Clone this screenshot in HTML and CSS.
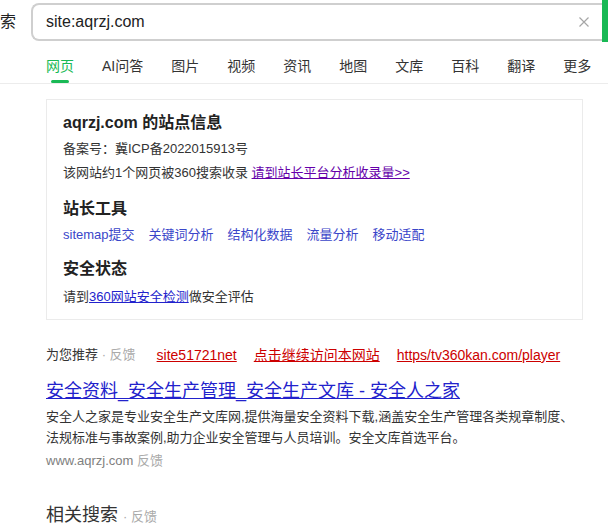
FILE: index.html
```html
<!DOCTYPE html>
<html lang="zh-CN">

<head>
    <meta charset="UTF-8">
    <meta name="viewport" content="width=device-width, initial-scale=1.0">
    <title>site:aqrzj.com - 360搜索</title>
    <link rel="stylesheet" href="styles.css">
</head>

<body>

    <!-- Header: logo + search box -->
    <div class="header">
        <div class="logo">索</div>
        <div class="search-box">
            <span class="query">site:aqrzj.com</span>
            <svg class="clear" width="10" height="10" viewBox="0 0 10 10">
                <path d="M0.5 0.5 L9.5 9.5 M9.5 0.5 L0.5 9.5" stroke="#a6a6a6" stroke-width="1.2" fill="none" />
            </svg>
        </div>
        <div class="search-btn"></div>
    </div>

    <!-- Tabs -->
    <div class="tabs">
        <a class="tab active"><span>网页</span><i class="bar"></i></a>
        <a class="tab"><span>AI问答</span></a>
        <a class="tab"><span>图片</span></a>
        <a class="tab"><span>视频</span></a>
        <a class="tab"><span>资讯</span></a>
        <a class="tab"><span>地图</span></a>
        <a class="tab"><span>文库</span></a>
        <a class="tab"><span>百科</span></a>
        <a class="tab"><span>翻译</span></a>
        <a class="tab"><span>更多</span></a>
    </div>

    <div class="main">
        <!-- Site info card -->
        <div class="site-card">
            <h3 class="card-title">aqrzj.com 的站点信息</h3>
            <p class="line first">备案号：冀ICP备2022015913号</p>
            <p class="line">该网站约1个网页被360搜索收录 <a class="visited">请到站长平台分析收录量&gt;&gt;</a></p>

            <h3 class="card-title section">站长工具</h3>
            <div class="tools">
                <a>sitemap提交</a>
                <a>关键词分析</a>
                <a>结构化数据</a>
                <a>流量分析</a>
                <a>移动适配</a>
            </div>

            <h3 class="card-title section last">安全状态</h3>
            <p class="line safe">请到<a class="blue">360网站安全检测</a>做安全评估</p>
        </div>

        <!-- Recommend row -->
        <div class="recommend">
            <span class="rec-label">为您推荐 <span class="muted">· 反馈</span></span>
            <div class="rec-links">
                <a>site51721net</a>
                <a>点击继续访问本网站</a>
                <a>https/tv360kan.com/player</a>
            </div>
        </div>

        <!-- Result -->
        <div class="result">
            <a class="res-title">安全资料_安全生产管理_安全生产文库 - 安全人之家</a>
            <p class="res-desc">安全人之家是专业安全生产文库网,提供海量安全资料下载,涵盖安全生产管理各类规章制度、法规标准与事故案例,助力企业安全管理与人员培训。安全文库首选平台。</p>
            <p class="res-url">www.aqrzj.com <span class="muted">反馈</span></p>
        </div>

        <div class="related">相关搜索 <span class="muted">· 反馈</span></div>
    </div>

</body>

</html>
```

FILE: styles.css
```css
body {
    margin: 0;
    font-family: "Liberation Sans", Arial, "Noto Sans CJK SC", sans-serif;
    color: #333;
    background: #fff;
    overflow: hidden;
}

a {
    cursor: pointer;
}

/* Header */
.header {
    display: flex;
    align-items: flex-start;
    height: 42px;
    overflow: hidden;
}

.logo {
    width: 31px;
    flex-shrink: 0;
    font-size: 16px;
    line-height: 20px;
    margin-top: 12px;
    color: #222;
}

.search-box {
    width: 571px;
    flex-shrink: 0;
    box-sizing: border-box;
    height: 38px;
    margin-top: 3px;
    border: 2px solid #cfcfcf;
    border-right: none;
    border-radius: 8px 0 0 8px;
    display: flex;
    align-items: center;
    padding-left: 13px;
}

.query {
    flex: 1;
    font-size: 16px;
    color: #222;
}

.clear {
    margin-right: 13px;
}

.search-btn {
    width: 60px;
    height: 42px;
    flex-shrink: 0;
    background: #19b955;
}

/* Tabs */
.tabs {
    display: flex;
    gap: 28px;
    padding-left: 46px;
    height: 42px;
    box-sizing: border-box;
    border-bottom: 1px solid #ececec;
}

.tab {
    display: flex;
    flex-direction: column;
    align-items: center;
    padding-top: 14px;
    font-size: 14px;
    line-height: 20px;
    color: #333;
}

.tab.active {
    color: #19b955;
}

.tab .bar {
    margin-top: auto;
    width: 18px;
    height: 3px;
    border-radius: 2px;
    background: #19b955;
}

/* Main column */
.main {
    width: 537px;
    margin-left: 46px;
}

.site-card {
    margin-top: 15px;
    border: 1px solid #ebebeb;
    padding: 12px 16px 10px;
}

.card-title {
    margin: 0;
    font-size: 16px;
    line-height: 22px;
    font-weight: bold;
    color: #222;
}

.card-title.section {
    margin-top: 13px;
}

.card-title.last {
    margin-top: 11px;
}

.line {
    margin: 0;
    font-size: 13px;
    line-height: 24px;
}

.line.first {
    margin-top: 3px;
}

.line.safe {
    margin-top: 5px;
}

.visited {
    color: #60a;
    text-decoration: underline;
}

.blue {
    color: #22c;
    text-decoration: underline;
}

.tools {
    display: flex;
    gap: 14px;
    margin-top: 3px;
    font-size: 13px;
    line-height: 24px;
}

.tools a {
    color: #3a46c9;
}

/* Recommend */
.recommend {
    display: flex;
    align-items: center;
    margin-top: 24px;
    line-height: 22px;
}

.rec-label {
    font-size: 13px;
    color: #333;
}

.muted {
    color: #aaa;
}

.rec-links {
    display: flex;
    gap: 17px;
    margin-left: 21px;
    font-size: 14px;
}

.rec-links a {
    color: #c00;
    text-decoration: underline;
}

/* Result */
.result {
    margin-top: 12px;
}

.res-title {
    display: block;
    font-size: 18px;
    line-height: 26px;
    color: #22c;
    text-decoration: underline;
}

.res-desc {
    margin: 2px 0 0;
    font-size: 13px;
    line-height: 21px;
    color: #333;
}

.res-url {
    margin: 2px 0 0;
    font-size: 13px;
    line-height: 22px;
    color: #808080;
}

.related {
    margin-top: 30px;
    font-size: 18px;
    line-height: 26px;
    color: #333;
}

.related .muted {
    font-size: 13px;
}
```
